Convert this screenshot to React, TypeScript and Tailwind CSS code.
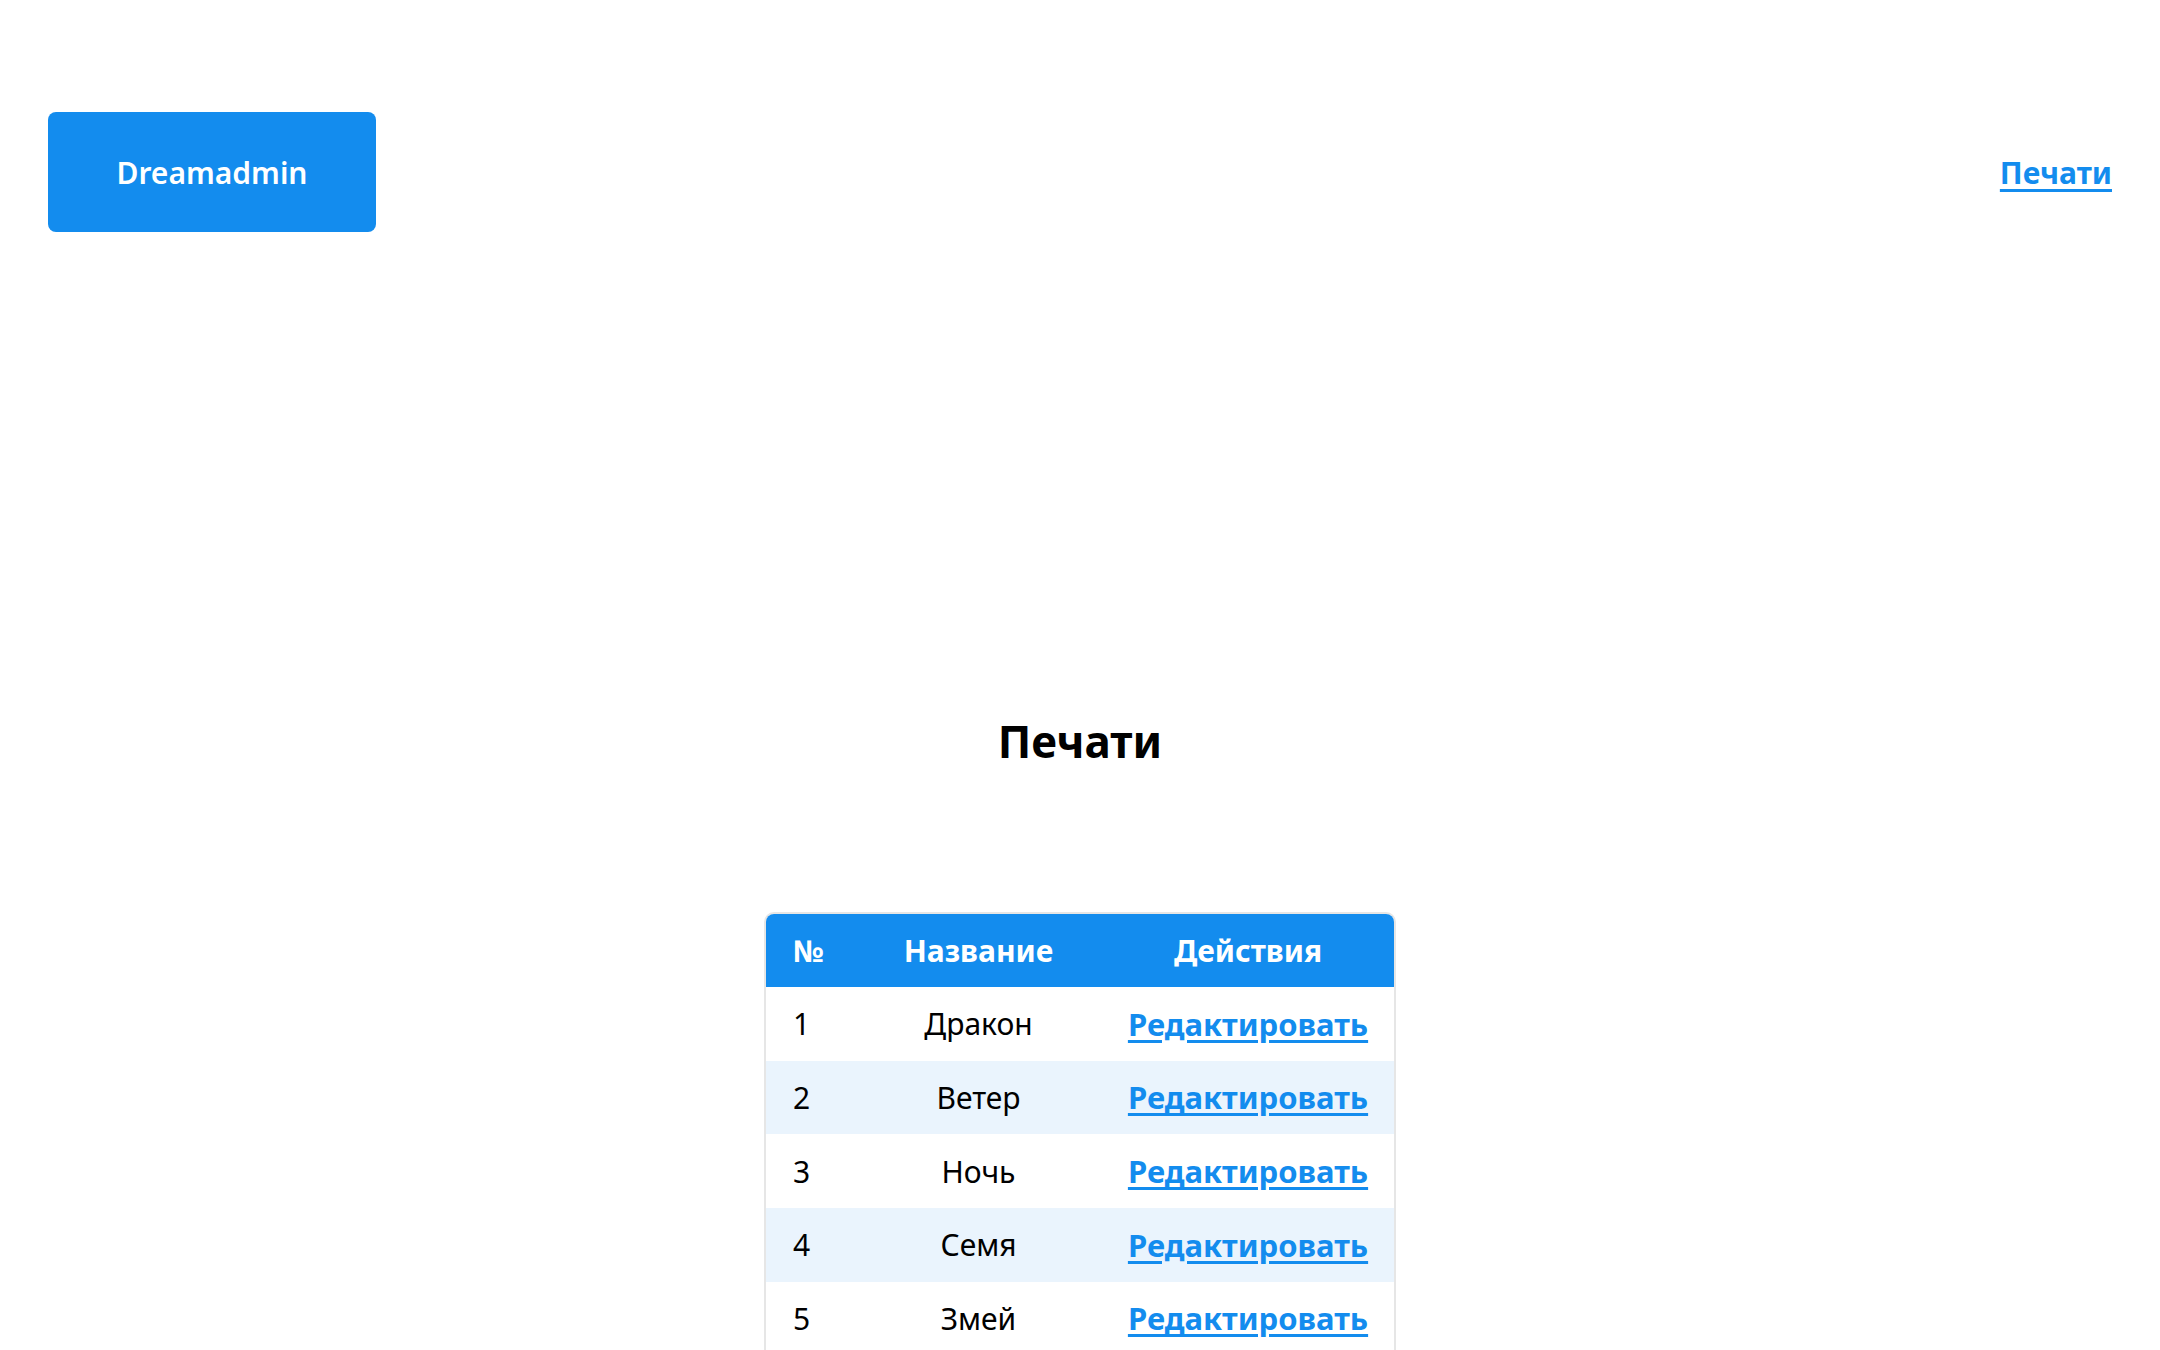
import React from "react";

const rows = [
  { id: 1, name: "Дракон" },
  { id: 2, name: "Ветер" },
  { id: 3, name: "Ночь" },
  { id: 4, name: "Семя" },
  { id: 5, name: "Змей" },
];

export default function App() {
  return (
    <div
      className="min-h-[1350px] bg-white text-black"
      style={{ fontFamily: '"Noto Sans", "Open Sans", sans-serif' }}
    >
      <header className="flex items-center justify-between px-12 pt-[112px]">
        <div className="flex h-[120px] w-[328px] items-center justify-center rounded-lg bg-[#138cee] text-[30px] font-semibold text-white">
          Dreamadmin
        </div>
        <a href="#" className="text-[30px] font-bold text-[#138cee] underline decoration-[3px] underline-offset-[5px]">
          Печати
        </a>
      </header>
      <main className="flex flex-col items-center">
        <h1 className="mt-[487px] text-[44px] font-bold leading-none">Печати</h1>
        <div className="mt-[149px] w-[632px] overflow-hidden rounded-t-[10px] border-2 border-[#e6e6e6]">
          <table className="w-full table-fixed border-collapse text-[30px]">
            <colgroup>
              <col className="w-[89px]" />
              <col className="w-[247px]" />
              <col className="w-[292px]" />
            </colgroup>
            <thead>
              <tr className="h-[73px] bg-[#138cee] text-white">
                <th className="pl-[27px] text-left font-bold">№</th>
                <th className="text-center font-bold">Название</th>
                <th className="text-center font-bold">Действия</th>
              </tr>
            </thead>
            <tbody>
              {rows.map((r, i) => (
                <tr key={r.id} className={i % 2 === 1 ? "h-[73.7px] bg-[#eaf4fd]" : "h-[73.7px] bg-white"}>
                  <td className="pl-[27px] text-left">{r.id}</td>
                  <td className="text-center">{r.name}</td>
                  <td className="text-center">
                    <a href="#" className="text-[31px] font-bold text-[#138cee] underline decoration-[3px] underline-offset-[4px]">
                      Редактировать
                    </a>
                  </td>
                </tr>
              ))}
            </tbody>
          </table>
        </div>
      </main>
    </div>
  );
}
